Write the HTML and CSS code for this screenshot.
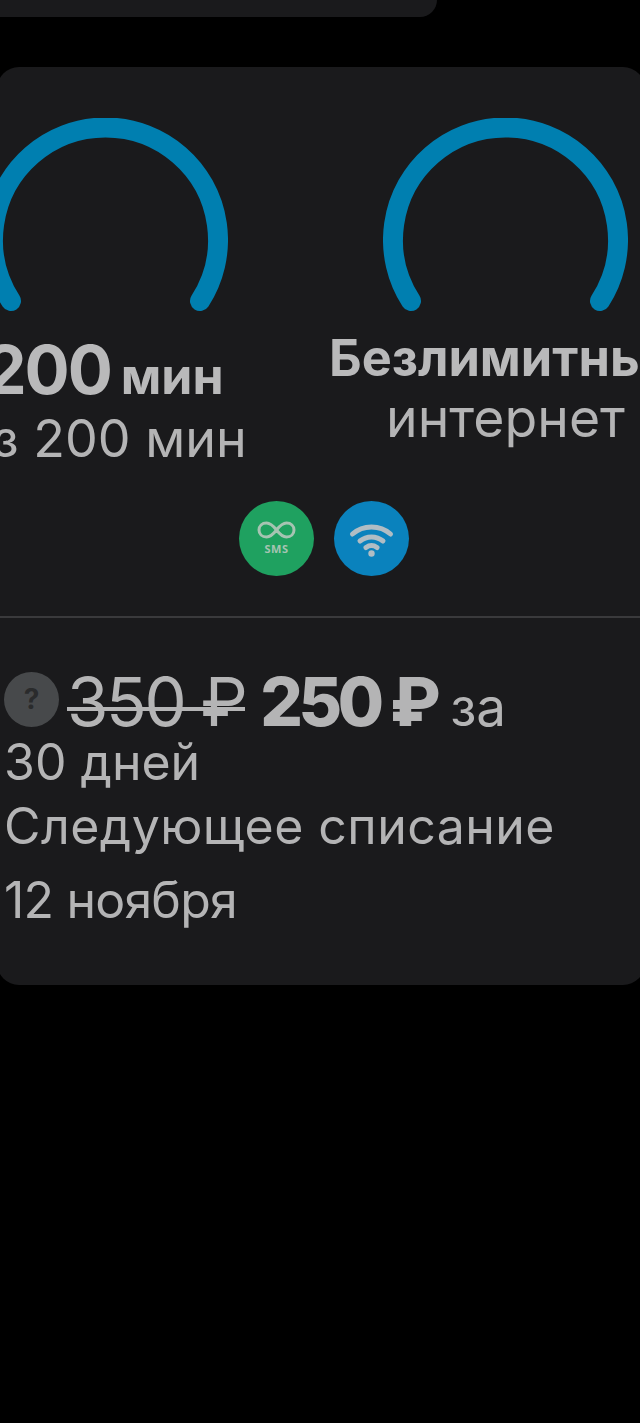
FILE: index.html
```html
<!DOCTYPE html>
<html lang="ru">
<head>
<meta charset="utf-8">
<title>Тариф</title>
<link rel="stylesheet" href="styles.css">
</head>
<body>
<div class="top-card"></div>
<main class="card">
  <section class="gauges">
    <div class="gauge">
      <svg class="arc" viewBox="0 0 245 200" aria-hidden="true"><path d="M28 183A112.500 112.500 0 1 1 217 183"/></svg>
      <div class="big"><span class="num">200</span> <span class="unit">мин</span></div>
      <div class="sub sub-left">из 200 мин</div>
    </div>
    <div class="gauge">
      <svg class="arc" viewBox="0 0 245 200" aria-hidden="true"><path d="M28 183A112.500 112.500 0 1 1 217 183"/></svg>
      <div class="title">Безлимитный</div>
      <div class="sub sub-right">интернет</div>
    </div>
  </section>
  <div class="badges">
    <span class="badge green">
      <svg viewBox="0 0 75 75" aria-hidden="true">
        <path class="inf" d="M37.500 29C34 24.500 31.500 22 27.500 22C23 22 20 25 20 29C20 33 23 36 27.500 36C31.500 36 34 33.500 37.500 29C41 24.500 43.500 22 47.500 22C52 22 55 25 55 29C55 33 52 36 47.500 36C43.500 36 41 33.500 37.500 29Z"/>
      </svg>
      <span class="sms">SMS</span>
    </span>
    <span class="badge blue">
      <svg viewBox="0 0 75 75" aria-hidden="true">
        <path class="wifi" d="M18.500 33C29 23.500 46 23.500 56.500 33"/>
        <path class="wifi" d="M26 40C32.500 34.500 42.500 34.500 49 40"/>
        <path class="wifi" d="M32 46.500C35.500 44 39.500 44 43 46.500"/>
        <circle class="dot" cx="37.500" cy="52.500" r="3.200"/>
      </svg>
    </span>
  </div>
  <hr class="divider">
  <section class="price">
    <p class="price-line"><span class="help">?</span> <s class="old">350 ₽</s> <b class="new">250 ₽</b> <span class="per">за</span> <span class="days">30 дней</span></p>
    <p class="next">Следующее списание</p>
    <p class="date">12 ноября</p>
  </section>
</main>
</body>
</html>
```
FILE: styles.css
```css
html, body {
  margin: 0;
  background: #000;
}
body {
  width: 640px;
  height: 1423px;
  overflow: hidden;
  font-family: Inter, "Noto Sans", sans-serif;
  color: #b4b4b5;
}
.top-card {
  width: 450px;
  height: 17px;
  margin-left: -13px;
  background: #1a1a1c;
  border-radius: 0 0 20px 0;
}
.card {
  width: 648px;
  height: 918px;
  margin: 50px 0 0 -3px;
  background: #1a1a1c;
  border-radius: 22px;
}
.gauges {
  display: flex;
  gap: 155px;
  margin-left: -14px;
  padding-top: 51px;
  height: 384px;
  box-sizing: border-box;
}
.gauge {
  flex: 0 0 245px;
  min-width: 0;
  display: flex;
  flex-direction: column;
  align-items: center;
  white-space: nowrap;
}
.arc {
  display: block;
  width: 245px;
  height: 200px;
  flex: none;
}
.arc path {
  fill: none;
  stroke: #007fb0;
  stroke-width: 20;
  stroke-linecap: round;
}
.big {
  margin: 22px 3px 0 0;
  line-height: 60px;
  font-weight: 700;
  color: #b9b9ba;
}
.num {
  font-size: 67px;
  letter-spacing: -2px;
}
.unit {
  font-size: 50px;
  margin-left: 6px;
}
.title {
  margin-top: 10px;
  line-height: 60px;
  font-size: 50.5px;
  font-weight: 700;
  color: #b9b9ba;
}
.sub {
  font-size: 52px;
  font-weight: 400;
}
.sub-left {
  line-height: 42px;
  margin-right: 2px;
}
.sub-right {
  line-height: 60px;
  font-size: 53.5px;
}
.badges {
  display: flex;
  justify-content: center;
  gap: 20px;
  margin: 50px 0 0 6px;
}
.badge {
  position: relative;
  display: block;
  width: 75px;
  height: 75px;
  border-radius: 50%;
}
.badge svg {
  display: block;
  width: 75px;
  height: 75px;
}
.green { background: #1fa160; }
.blue { background: #0a82bd; }
.inf {
  fill: none;
  stroke: #a6c4b2;
  stroke-width: 3;
}
.sms {
  position: absolute;
  left: 0;
  right: 0;
  top: 41px;
  text-align: center;
  font-family: "Noto Sans", sans-serif;
  font-size: 11px;
  letter-spacing: 0.5px;
  line-height: 14px;
  font-weight: 700;
  color: #a6c4b2;
}
.wifi {
  fill: none;
  stroke: #b0bdc4;
  stroke-width: 5;
  stroke-linecap: round;
}
.dot { fill: #b0bdc4; }
.divider {
  height: 2px;
  margin: 40px 0 0;
  border: 0;
  background: #3a3a3c;
}
.price {
  padding: 54px 0 0 7px;
}
.price p {
  margin: 0;
  font-weight: 400;
  font-size: 50px;
}
.price-line { line-height: 54px; }
.help {
  display: inline-block;
  overflow: hidden;
  width: 55px;
  height: 55px;
  margin-right: -6px;
  border-radius: 50%;
  background: #47494b;
  color: #2a2b2c;
  font-size: 28px;
  font-weight: 700;
  line-height: 55px;
  text-align: center;
  vertical-align: -1px;
}
.old {
  position: relative;
  font-size: 67px;
  font-weight: 400;
  letter-spacing: -2.4px;
  text-decoration: none;
}
.old::after {
  content: "";
  position: absolute;
  left: 0;
  right: 0;
  bottom: 31px;
  height: 4px;
  background: #b4b4b5;
}
.new {
  margin-left: 1px;
  font-size: 67px;
  font-weight: 800;
  letter-spacing: -4.5px;
}
.per {
  font-size: 53px;
  margin-left: 0;
}
.days {
  font-size: 50px;
  white-space: nowrap;
}
.next {
  line-height: 74px;
  letter-spacing: 0.45px;
}
.date {
  line-height: 74px;
  letter-spacing: -0.8px;
}
```
